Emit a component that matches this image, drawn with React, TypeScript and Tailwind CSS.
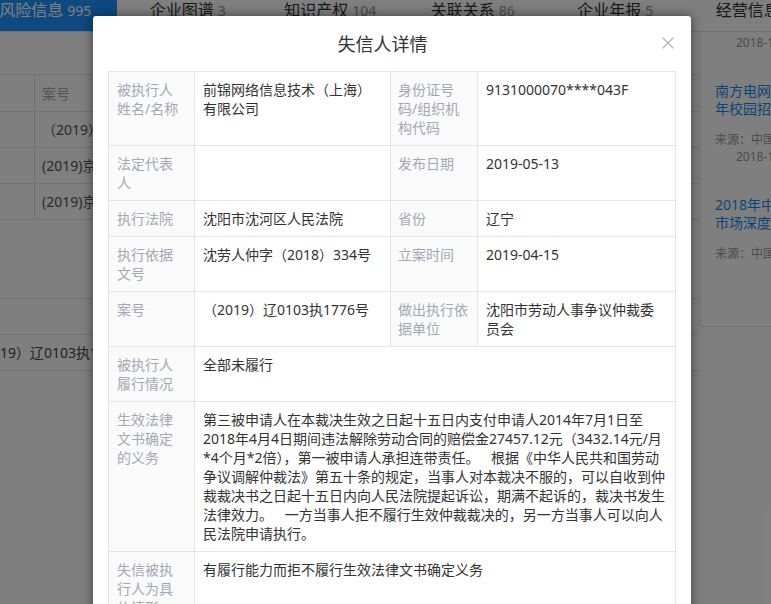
import { X } from "lucide-react";

const tabs = [
  { label: "风险信息", count: 995, active: true },
  { label: "企业图谱", count: 3 },
  { label: "知识产权", count: 104 },
  { label: "关联关系", count: 86 },
  { label: "企业年报", count: 5 },
  { label: "经营信息", count: 12 },
];

const caseRows = [
  "（2019）辽0103执1776号",
  "(2019)京0105执21385号",
  "(2019)京0108执18842号",
];

const news = [
  {
    title: ["南方电网广东公司2019", "年校园招聘公告正式发布"],
    source: "来源：中国新闻网",
    date: "2018-11-09",
    wrapDate: true,
  },
  {
    title: ["2018年中国人力资源服务", "市场深度调研及前景分析"],
    source: "来源：中国产业",
    date: "2018-11-06",
    wrapDate: false,
  },
];

const duty =
  "第三被申请人在本裁决生效之日起十五日内支付申请人2014年7月1日至2018年4月4日期间违法解除劳动合同的赔偿金27457.12元（3432.14元/月*4个月*2倍），第一被申请人承担连带责任。 根据《中华人民共和国劳动争议调解仲裁法》第五十条的规定，当事人对本裁决不服的，可以自收到仲裁裁决书之日起十五日内向人民法院提起诉讼，期满不起诉的，裁决书发生法律效力。 一方当事人拒不履行生效仲裁裁决的，另一方当事人可以向人民法院申请执行。";

const th1 =
  "border border-[#e5e5e5] bg-[#fafafa] py-[8px] pl-[8px] pr-[9px] text-left align-top font-normal leading-[19px] text-[#a3a8b7]";
const th3 =
  "border border-[#e5e5e5] bg-[#fafafa] px-[7px] py-[8px] text-left align-top font-normal leading-[19px] text-[#a3a8b7]";
const td =
  "border border-[#e5e5e5] py-[8px] pl-[8px] align-top leading-[19px] text-[#333]";

export default function App() {
  return (
    <div className="relative h-screen w-full overflow-hidden bg-white font-['Noto_Sans','Noto_Sans_CJK_SC',sans-serif] text-[14px] text-[#333]">
      {/* page behind the dialog */}
      <div className="-ml-[26px] flex h-[32px] border-b border-[#e4e4e4]">
        {tabs.map((t) => (
          <div
            key={t.label}
            className={`w-[142.5px] shrink-0 text-center leading-[20px] ${
              t.active ? "bg-[#1d93ff] text-white" : "text-[#333]"
            }`}
          >
            <span className="text-[16px]">{t.label}</span>
            <span className={`ml-1 text-[14px] ${t.active ? "text-white" : "text-[#999]"}`}>
              {t.count}
            </span>
          </div>
        ))}
      </div>

      <div className="flex">
        <main className="w-[699px] shrink-0">
          <div className="-ml-[20px] mt-[42px] border-t border-[#e4e4e4]">
            <div className="flex h-[37px] items-center border-b border-[#e4e4e4]">
              <div className="h-full w-[55px] border-r border-[#e4e4e4]" />
              <div className="flex h-full w-[220px] items-center border-r border-[#e4e4e4] pl-[7px] text-[#aaa]">
                案号
              </div>
              <div className="flex-1" />
            </div>
            {caseRows.map((c) => (
              <div key={c} className="flex h-[36px] border-b border-[#e4e4e4]">
                <div className="h-full w-[55px] border-r border-[#e4e4e4]" />
                <div className="flex h-full w-[220px] items-center border-r border-[#e4e4e4] pl-[7px] text-[#555]">
                  {c}
                </div>
                <div className="flex-1" />
              </div>
            ))}
          </div>

          <div className="-ml-[30px] mt-[78px] border-t border-[#e4e4e4]">
            <div className="h-[36px] border-b border-[#e4e4e4]" />
            <div className="flex h-[36px] items-center border-b border-[#e4e4e4] text-[#444]">
              （2019）辽0103执1776号
            </div>
          </div>
        </main>

        <aside className="h-[295px] w-[260px] shrink-0 border-b border-l border-[#e4e4e4] pl-[15px]">
          <div className="mt-[2px] pl-[21px] text-[12px] leading-[17px] text-[#999]">2018-11-12</div>
          {news.map((n) => (
            <div key={n.date} className="mt-[31px]">
              {n.title.map((line) => (
                <div key={line} className="whitespace-nowrap text-[14px] leading-[18px] text-[#128bed]">
                  {line}
                </div>
              ))}
              {n.wrapDate ? (
                <>
                  <div className="mt-[13px] whitespace-nowrap text-[12px] leading-[17px] text-[#999]">{n.source}</div>
                  <div className="pl-[21px] text-[12px] leading-[17px] text-[#999]">{n.date}</div>
                </>
              ) : (
                <div className="mt-[13px] whitespace-nowrap text-[12px] leading-[17px] text-[#999]">
                  {n.source}
                  <span className="ml-[40px]">{n.date}</span>
                </div>
              )}
            </div>
          ))}
        </aside>
      </div>

      {/* dialog */}
      <div className="absolute inset-0 bg-black/50" />
      <div className="absolute left-[93px] top-[16px] w-[598px] rounded-[3px] bg-white shadow-[0_0_12px_rgba(0,0,0,0.5)]">
        <div className="relative flex h-[55px] items-center justify-center pr-[19px]">
          <h3 className="text-[18px] font-normal leading-[24px] text-[#333]">失信人详情</h3>
          <button className="absolute right-[13px] top-[17px] text-[#b5b5b5]">
            <X size={20} strokeWidth={1.4} />
          </button>
        </div>
        <div className="px-[15px] pb-[20px]">
          <table className="w-full table-fixed border-collapse text-[14px]">
            <colgroup>
              <col className="w-[86px]" />
              <col className="w-[196px]" />
              <col className="w-[87px]" />
              <col />
            </colgroup>
            <tbody>
              <tr>
                <th className={th1}>被执行人姓名/名称</th>
                <td className={`${td} pr-[8px]`}>前锦网络信息技术（上海）有限公司</td>
                <th className={th3}>身份证号码/组织机构代码</th>
                <td className={`${td} pr-[10px]`}>9131000070****043F</td>
              </tr>
              <tr>
                <th className={th1}>法定代表人</th>
                <td className={`${td} pr-[8px]`}></td>
                <th className={th3}>发布日期</th>
                <td className={`${td} pr-[10px]`}>2019-05-13</td>
              </tr>
              <tr>
                <th className={th1}>执行法院</th>
                <td className={`${td} pr-[8px]`}>沈阳市沈河区人民法院</td>
                <th className={th3}>省份</th>
                <td className={`${td} pr-[10px]`}>辽宁</td>
              </tr>
              <tr>
                <th className={th1}>执行依据文号</th>
                <td className={`${td} pr-[8px]`}>沈劳人仲字（2018）334号</td>
                <th className={th3}>立案时间</th>
                <td className={`${td} pr-[10px]`}>2019-04-15</td>
              </tr>
              <tr>
                <th className={th1}>案号</th>
                <td className={`${td} pr-[8px]`}>（2019）辽0103执1776号</td>
                <th className={th3}>做出执行依据单位</th>
                <td className={`${td} pr-[10px]`}>沈阳市劳动人事争议仲裁委员会</td>
              </tr>
              <tr>
                <th className={th1}>被执行人履行情况</th>
                <td colSpan={3} className={`${td} pr-[9px]`}>全部未履行</td>
              </tr>
              <tr>
                <th className={th1}>生效法律文书确定的义务</th>
                <td colSpan={3} className={`${td} pr-[9px] [word-spacing:8px]`}>{duty}</td>
              </tr>
              <tr>
                <th className={th1}>失信被执行人为具体情形</th>
                <td colSpan={3} className={`${td} pr-[9px]`}>有履行能力而拒不履行生效法律文书确定义务</td>
              </tr>
              <tr>
                <th className={th1}>已履行部分</th>
                <td colSpan={3} className={`${td} pr-[9px]`}>暂无</td>
              </tr>
              <tr>
                <th className={th1}>未履行部分</th>
                <td colSpan={3} className={`${td} pr-[9px]`}>暂无</td>
              </tr>
            </tbody>
          </table>
        </div>
      </div>
    </div>
  );
}
